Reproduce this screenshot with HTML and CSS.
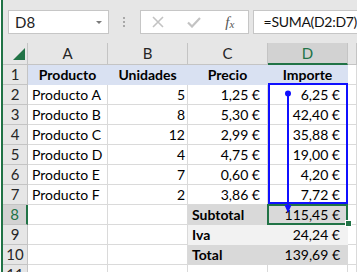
FILE: index.html
```html
<!DOCTYPE html>
<html lang="es">
<head>
  <meta charset="utf-8">
  <title>Libro1 - Excel</title>
  <link rel="stylesheet" href="styles.css">
</head>
<body>
  <div class="window">
    <div class="formula-bar">
      <div class="name-box"><span>D8</span><span class="caret"></span></div>
      <div class="grip"><i></i><i></i><i></i></div>
      <div class="fx-box">
        <span><svg width="12" height="12" viewBox="0 0 12 12"><path d="M1 1L11 11M11 1L1 11" stroke="#c3c3c3" stroke-width="1.6" fill="none"/></svg></span>
        <span><svg width="14" height="11" viewBox="0 0 14 11"><path d="M1 5.5L5 9.5L13 1" stroke="#c3c3c3" stroke-width="2.2" fill="none"/></svg></span>
        <span class="fx">f<small>x</small></span>
      </div>
      <div class="formula">=SUMA(D2:D7)</div>
    </div>

    <div class="grid">
      <div class="corner"><svg width="12" height="12" viewBox="0 0 12 12"><polygon points="12,0 12,12 0,12" fill="#217346"/></svg></div>
      <div class="col">A</div><div class="col">B</div><div class="col">C</div><div class="col sel">D</div><div class="col"></div>

      <div class="row">1</div><div class="head">Producto</div><div class="head">Unidades</div><div class="head">Precio</div><div class="head">Importe</div><div></div>
      <div class="row">2</div><div>Producto A</div><div class="num">5</div><div class="eur">1,25 €</div><div class="eur">6,25 €</div><div></div>
      <div class="row">3</div><div>Producto B</div><div class="num">8</div><div class="eur">5,30 €</div><div class="eur">42,40 €</div><div></div>
      <div class="row">4</div><div>Producto C</div><div class="num">12</div><div class="eur">2,99 €</div><div class="eur">35,88 €</div><div></div>
      <div class="row">5</div><div>Producto D</div><div class="num">4</div><div class="eur">4,75 €</div><div class="eur">19,00 €</div><div></div>
      <div class="row">6</div><div>Producto E</div><div class="num">7</div><div class="eur">0,60 €</div><div class="eur">4,20 €</div><div></div>
      <div class="row">7</div><div>Producto F</div><div class="num">2</div><div class="eur">3,86 €</div><div class="eur">7,72 €</div><div></div>
      <div class="row sel">8</div><div></div><div></div><div class="dark bold">Subtotal</div><div class="dark eur">115,45 €</div><div></div>
      <div class="row">9</div><div></div><div></div><div class="light bold">Iva</div><div class="light eur">24,24 €</div><div></div>
      <div class="row">10</div><div></div><div></div><div class="dark bold">Total</div><div class="dark eur">139,69 €</div><div></div>
      <div class="row">11</div><div></div><div></div><div></div><div></div><div></div>
    </div>

    <!-- trace precedents arrow + active cell, drawn over the sheet -->
    <svg class="overlay" width="354" height="272" viewBox="3 0 354 272">
      <rect x="269" y="84" width="78" height="119" fill="none" stroke="#1010ff" stroke-width="2"/>
      <rect x="268" y="205" width="79" height="19" fill="none" stroke="#217346" stroke-width="2"/>
      <rect x="345.5" y="220.5" width="6" height="6" fill="#217346" stroke="#fff" stroke-width="1"/>
      <line x1="288" y1="93.5" x2="288" y2="206" stroke="#1010ff" stroke-width="2"/>
      <circle cx="288" cy="93.5" r="3" fill="#1010ff"/>
      <polygon points="284.5,205 291.5,205 288,213" fill="#1010ff"/>
    </svg>
  </div>
</body>
</html>
```

FILE: styles.css
```css
body {
  margin: 0;
  width: 357px;
  height: 272px;
  overflow: hidden;
  background: #fff;
  font-family: 'Lato', 'Liberation Sans', sans-serif;
  color: #000;
}

.window {
  position: relative;
  margin-left: 1px;
  border-left: 2px solid #217346;
  height: 272px;
  overflow: hidden;
}

/* formula bar */

.formula-bar {
  display: flex;
  align-items: flex-start;
  height: 43px;
  box-sizing: border-box;
  padding: 10px 0 0 5px;
  background: #e6e6e6;
}

.name-box {
  width: 101px;
  height: 24px;
  box-sizing: border-box;
  border: 1px solid #c6c6c6;
  background: #fff;
  display: flex;
  align-items: center;
  justify-content: space-between;
  padding: 0 6px;
  font-size: 15px;
  color: #222;
}

.caret {
  border-left: 3px solid transparent;
  border-right: 3px solid transparent;
  border-top: 3px solid #7a7a7a;
}

.grip {
  width: 31px;
  display: flex;
  flex-direction: column;
  align-items: center;
  gap: 2px;
  padding-top: 7px;
}

.grip i {
  width: 2px;
  height: 2px;
  background: #a8a8a8;
}

.fx-box {
  width: 109px;
  height: 24px;
  box-sizing: border-box;
  border: 1px solid #c6c6c6;
  background: #fff;
  display: flex;
  margin-right: 4px;
}

.fx-box span {
  width: 36px;
  display: flex;
  align-items: center;
  justify-content: center;
}

.fx {
  font-family: 'Liberation Serif', serif;
  font-style: italic;
  font-size: 15px;
  color: #555;
}

.fx small {
  font-size: 11px;
  margin-top: 3px;
}

.formula {
  flex: 1;
  height: 24px;
  box-sizing: border-box;
  border: 1px solid #c6c6c6;
  border-right: none;
  background: #fff;
  padding-left: 10px;
  font-size: 14px;
  letter-spacing: -0.3px;
  line-height: 22px;
  color: #111;
  white-space: nowrap;
}

/* sheet */

.grid {
  display: grid;
  grid-template-columns: 25px repeat(4, 80px) 1fr;
  grid-template-rows: 22px;
  grid-auto-rows: 20px;
  font-size: 14px;
}

.grid > div {
  box-sizing: border-box;
  border-right: 1px solid #dadada;
  border-bottom: 1px solid #dadada;
  line-height: 19px;
  padding: 0 4px;
  white-space: nowrap;
  overflow: hidden;
}

.grid > .corner {
  display: flex;
  justify-content: flex-end;
  align-items: flex-end;
  padding: 0 2px 4px 0;
  background: #e6e6e6;
  border-color: #c4c4c4;
}

.grid > .col {
  background: #e6e6e6;
  border-color: #c4c4c4;
  text-align: center;
  line-height: 21px;
  font-size: 15px;
  color: #262626;
}

.grid > .col.sel {
  background: #d2d2d2;
  border-bottom: 2px solid #217346;
  line-height: 20px;
  color: #217346;
}

.grid > .row {
  background: #e6e6e6;
  border-color: #c4c4c4;
  text-align: center;
  padding: 0;
  font-size: 15px;
  color: #262626;
}

.grid > .row.sel {
  background: #d2d2d2;
  border-right: 2px solid #217346;
  color: #217346;
}

.grid > .head {
  background: #d9e1f2;
  border-color: #d9e1f2;
  font-weight: 700;
  text-align: center;
}

.grid > .num {
  text-align: right;
  padding-right: 2px;
}

.grid > .eur {
  text-align: right;
  padding-right: 7px;
}

.grid > .dark {
  background: #d9d9d9;
  border-color: #d9d9d9;
}

.grid > .light {
  background: #f2f2f2;
  border-color: #f2f2f2;
}

.bold {
  font-weight: 700;
}

.overlay {
  position: absolute;
  left: 0;
  top: 0;
}
```
